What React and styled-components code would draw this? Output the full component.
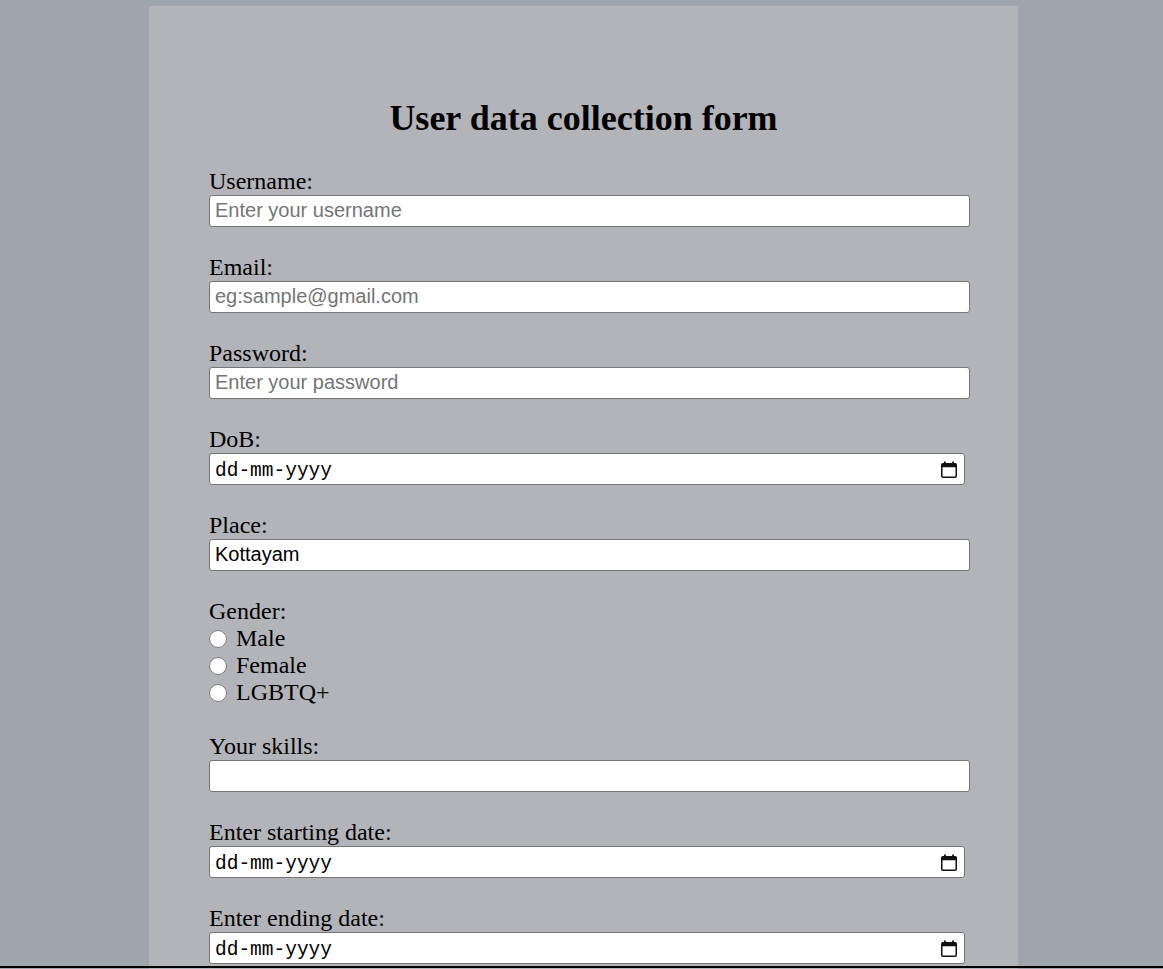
import React from 'react'
import styled, { createGlobalStyle } from 'styled-components'

const GlobalStyle = createGlobalStyle`
  html, body {
    margin: 0;
    padding: 0;
    background-color: #9ea5ad;
  }
  body {
    font-family: "Liberation Serif", "Times New Roman", serif;
    color: #000;
  }
`

const Page = styled.div`
  padding-top: 6px;
`
const FormCard = styled.form`
  width: 869px;
  box-sizing: border-box;
  margin-left: 149px;
  padding: 92px 60px 40px;
  background-color: #b3b4b9;
`
const Title = styled.h1`
  margin: 0 0 29px;
  font-size: 36px;
  line-height: 41px;
  font-weight: bold;
  text-align: center;
`
const Field = styled.div`
  display: flex;
  flex-direction: column;
  align-items: flex-start;
  margin-bottom: 27px;
`
const Label = styled.label`
  font-size: 24px;
  line-height: 27px;
`
const TextInput = styled.input`
  width: 761px;
  height: 32px;
  box-sizing: border-box;
  margin: 0;
  padding: 0 5px 1px;
  border: 1px solid #767676;
  border-radius: 3px;
  background: #fff;
  font-family: "Liberation Sans", Arial, sans-serif;
  font-size: 20px;
  color: #000;
  &::placeholder {
    color: #757575;
  }
`
const DateBox = styled.div`
  display: flex;
  align-items: center;
  width: 756px;
  height: 32px;
  box-sizing: border-box;
  padding: 0 7px 0 5px;
  border: 1px solid #767676;
  border-radius: 3px;
  background: #fff;
`
const DateText = styled.input`
  flex: 1;
  min-width: 0;
  margin: 0;
  padding: 3px 0 0;
  border: none;
  outline: none;
  background: transparent;
  font-family: "Liberation Mono", "DejaVu Sans Mono", monospace;
  font-size: 19.5px;
  color: #000;
  &::placeholder {
    color: #000;
  }
`
const PickerButton = styled.button`
  display: flex;
  padding: 0;
  border: none;
  background: none;
  cursor: pointer;
`
const RadioRow = styled.label`
  display: flex;
  align-items: center;
  gap: 9px;
  height: 27px;
  font-size: 24px;
`
const Radio = styled.input`
  width: 18px;
  height: 18px;
  margin: 0;
`
const FoldLine = styled.div`
  position: fixed;
  left: 0;
  right: 0;
  top: 966px;
  height: 2px;
  background: #000;
`

const CalendarIcon = () => (
  <svg width="16" height="17" viewBox="0 0 16 17" fill="none">
    <rect x="0.75" y="2.75" width="14.5" height="13.5" rx="1.2" stroke="#111" strokeWidth="1.5" />
    <rect x="0.75" y="2.75" width="14.5" height="3.5" fill="#111" />
    <rect x="3" y="0.5" width="1.8" height="3" fill="#111" />
    <rect x="11.2" y="0.5" width="1.8" height="3" fill="#111" />
  </svg>
)

const DateField = ({ id }) => (
  <DateBox>
    <DateText id={id} type="text" placeholder="dd-mm-yyyy" />
    <PickerButton type="button" aria-label="Show date picker">
      <CalendarIcon />
    </PickerButton>
  </DateBox>
)

const textFields = [
  { id: 'username', label: 'Username:', type: 'text', placeholder: 'Enter your username' },
  { id: 'email', label: 'Email:', type: 'email', placeholder: 'eg:sample@gmail.com' },
  { id: 'password', label: 'Password:', type: 'password', placeholder: 'Enter your password' },
]

export default function App() {
  return (
    <Page>
      <GlobalStyle />
      <FormCard onSubmit={(e) => e.preventDefault()}>
        <Title>User data collection form</Title>
        {textFields.map((f) => (
          <Field key={f.id}>
            <Label htmlFor={f.id}>{f.label}</Label>
            <TextInput id={f.id} type={f.type} placeholder={f.placeholder} />
          </Field>
        ))}
        <Field>
          <Label htmlFor="dob">DoB:</Label>
          <DateField id="dob" />
        </Field>
        <Field>
          <Label htmlFor="place">Place:</Label>
          <TextInput id="place" type="text" defaultValue="Kottayam" />
        </Field>
        <Field>
          <Label>Gender:</Label>
          {['Male', 'Female', 'LGBTQ+'].map((g) => (
            <RadioRow key={g}>
              <Radio type="radio" name="gender" value={g} />
              {g}
            </RadioRow>
          ))}
        </Field>
        <Field>
          <Label htmlFor="skills">Your skills:</Label>
          <TextInput id="skills" type="text" />
        </Field>
        <Field>
          <Label htmlFor="start">Enter starting date:</Label>
          <DateField id="start" />
        </Field>
        <Field>
          <Label htmlFor="end">Enter ending date:</Label>
          <DateField id="end" />
        </Field>
      </FormCard>
      <FoldLine />
    </Page>
  )
}
